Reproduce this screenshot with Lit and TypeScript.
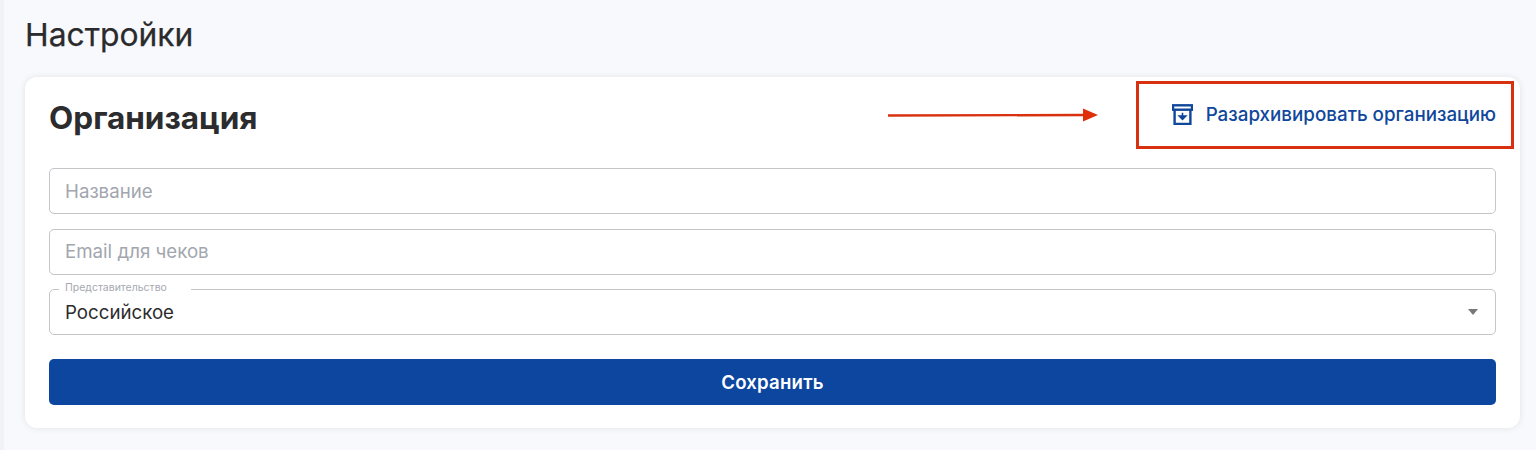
import { LitElement, html, css } from "lit";
import { customElement } from "lit/decorators.js";

@customElement("app-root")
export class AppRoot extends LitElement {
  static styles = css`
    :host { display: block; font-family: Inter, "Noto Sans", sans-serif; }
    .page {
      position: relative; box-sizing: border-box; height: 450px;
      background: #f8f9fc; padding: 17px 16px 0 25px; overflow: hidden;
    }
    .edge { position: absolute; left: 0; top: 0; bottom: 0; width: 4px; background: #f1f2f4; }
    h1 { margin: 0 0 8px; height: 52px; box-sizing: border-box; font-size: 31.8px; line-height: 35px; font-weight: 400; color: #2b2b2d; -webkit-text-stroke: .25px #2b2b2d; }
    .card {
      background: #fff; border-radius: 12px; height: 351px; box-sizing: border-box;
      padding: 20px 24px 0; box-shadow: 0 0 6px rgba(20, 30, 50, .10);
    }
    .head { display: flex; justify-content: space-between; align-items: center; height: 40px; margin-bottom: 31px; }
    h2 { margin: 2px 0 0; font-size: 31.5px; line-height: 40px; font-weight: 700; color: #2c2c2e; }
    .link { display: flex; align-items: center; gap: 13px; color: #0f479c; font-size: 18.8px; font-weight: 500; margin-top: -6px; }
    .link svg { display: block; }
    .form { display: flex; flex-direction: column; gap: 14.6px; }
    .field {
      position: relative; box-sizing: border-box; height: 46px; border: 1px solid #c4c6ca; border-radius: 5px;
      display: flex; align-items: center; justify-content: space-between; padding: 0 15px; font-size: 18.7px; background: #fff;
    }
    .ph { color: #a2a6ae; }
    .val { color: #2b2b2d; }
    .legend {
      position: absolute; left: 9px; top: -9px; padding: 0 6px; background: #fff; width: 120px;
      box-sizing: content-box; font-size: 10.5px; line-height: 14px; color: #a6a9b0; white-space: nowrap;
    }
    .caret { width: 0; height: 0; border: 5.5px solid transparent; border-top: 6px solid #77787b; border-bottom: 0; margin-right: 2px; }
    .save {
      margin-top: 24px; width: 100%; height: 46px; border: 0; border-radius: 5px; background: #0c469f; color: #fff;
      font: 600 18.6px Inter, sans-serif; letter-spacing: .2px; display: block;
    }
    .redbox { position: absolute; left: 1136px; top: 81px; width: 378px; height: 68px; box-sizing: border-box; border: 3px solid #d8310f; pointer-events: none; }
    .arrow { position: absolute; left: 886px; top: 105px; }
  `;

  render() {
    return html`
      <div class="page">
        <div class="edge"></div>
        <h1>Настройки</h1>
        <section class="card">
          <div class="head">
            <h2>Организация</h2>
            <div class="link">
              <svg width="21" height="21" viewBox="0 0 21 21" fill="none">
                <rect x="1" y="1.3" width="19" height="4.4" fill="#fff" stroke="#0f479c" stroke-width="2.4"/>
                <path d="M2.6 6V20h15.8V6" stroke="#0f479c" stroke-width="2.4"/>
                <path d="M10.5 8.8v3.5M7.2 12l3.3 3.4 3.3-3.4z" stroke="#0f479c" stroke-width="1.6" fill="#0f479c"/>
              </svg>
              <span>Разархивировать организацию</span>
            </div>
          </div>
          <div class="form">
            <div class="field"><span class="ph">Название</span></div>
            <div class="field"><span class="ph">Email для чеков</span></div>
            <div class="field">
              <span class="legend">Представительство</span>
              <span class="val">Российское</span>
              <span class="caret"></span>
            </div>
          </div>
          <button class="save">Сохранить</button>
        </section>
        <div class="redbox"></div>
        <svg class="arrow" width="216" height="20" viewBox="0 0 216 20">
          <path d="M2 10.5L200 10" stroke="#d8310f" stroke-width="2.4"/>
          <path d="M197 3.5L212 10L197 16.5z" fill="#e0300a"/>
        </svg>
      </div>
    `;
  }
}
